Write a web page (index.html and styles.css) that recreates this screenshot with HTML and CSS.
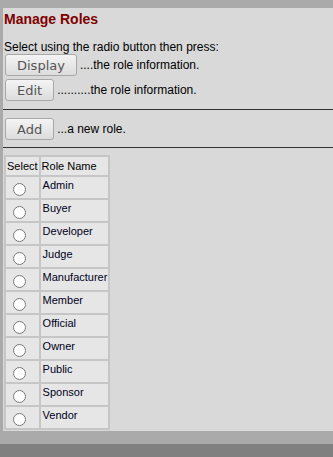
FILE: index.html
```html
<!DOCTYPE html>
<html lang="en">
<head>
<meta charset="UTF-8">
<title>Manage Roles</title>
<link rel="stylesheet" href="styles.css">
</head>
<body>

<div class="frame">
  <div class="panel">
    <h2>Manage Roles</h2>

    <p class="intro">Select using the radio button then press:</p>
    <div class="action first"><button class="btn">Display</button> ....the role information.</div>
    <div class="action"><button class="btn">Edit</button> ..........the role information.</div>

    <hr>
    <div class="action"><button class="btn">Add</button> ...a new role.</div>
    <hr class="last">

    <table class="roles">
      <tr><th>Select</th><th>Role Name</th></tr>
      <tr><td class="pick"><input type="radio" name="role"></td><td>Admin</td></tr>
      <tr><td class="pick"><input type="radio" name="role"></td><td>Buyer</td></tr>
      <tr><td class="pick"><input type="radio" name="role"></td><td>Developer</td></tr>
      <tr><td class="pick"><input type="radio" name="role"></td><td>Judge</td></tr>
      <tr><td class="pick"><input type="radio" name="role"></td><td>Manufacturer</td></tr>
      <tr><td class="pick"><input type="radio" name="role"></td><td>Member</td></tr>
      <tr><td class="pick"><input type="radio" name="role"></td><td>Official</td></tr>
      <tr><td class="pick"><input type="radio" name="role"></td><td>Owner</td></tr>
      <tr><td class="pick"><input type="radio" name="role"></td><td>Public</td></tr>
      <tr><td class="pick"><input type="radio" name="role"></td><td>Sponsor</td></tr>
      <tr><td class="pick"><input type="radio" name="role"></td><td>Vendor</td></tr>
    </table>
  </div>
</div>

</body>
</html>
```

FILE: styles.css
```css
body {
    margin: 0;
    padding: 0;
    background-color: #808080;
    font-family: 'Liberation Sans', Arial, sans-serif;
    color: #000;
}

.frame {
    background-color: #aaaaaa;
    padding: 8px 0 13px 3px;
}

.panel {
    background-color: #d9d9d9;
    padding: 1px 0 1px 1px;
    height: 421px;
}

h2 {
    margin: 2px 0 0 0;
    font-size: 14px;
    line-height: 17px;
    color: #800000;
}

.intro {
    margin: 12px 0 0 0;
    font-size: 12px;
    line-height: 14px;
}

.action {
    display: flex;
    align-items: center;
    font-size: 12px;
    margin-top: 3px;
}

.action.first {
    margin-top: 0;
}

.btn {
    font-family: 'DejaVu Sans', sans-serif;
    font-size: 13px;
    color: #555;
    height: 22px;
    padding: 0 11px;
    margin: 0 3px 0 1px;
    border: 1px solid #a8a8a8;
    border-radius: 3px;
    background: linear-gradient(#f4f4f4, #dcdcdc);
}

hr {
    border: 0;
    border-top: 1px solid #333;
    margin: 8px 0 8px -1px;
}

hr.last {
    margin: 7px 0 7px -1px;
}

.roles {
    margin-top: 0;
    border-collapse: separate;
    border-spacing: 2px;
    background-color: #c6c6c6;
    font-size: 11px;
}

.roles th {
    background-color: #e6e6e6;
    font-weight: normal;
    height: 16px;
    padding: 1px;
    text-align: left;
}

.roles td {
    background-color: #e6e6e6;
    height: 19px;
    padding: 2px 1px 0 2px;
    vertical-align: top;
    color: #000022;
}

.roles td.pick {
    text-align: left;
    padding: 0 0 0 2px;
    vertical-align: bottom;
}

.roles input {
    margin: 2px 0 2px 5px;
    width: 13px;
    height: 13px;
}
```
